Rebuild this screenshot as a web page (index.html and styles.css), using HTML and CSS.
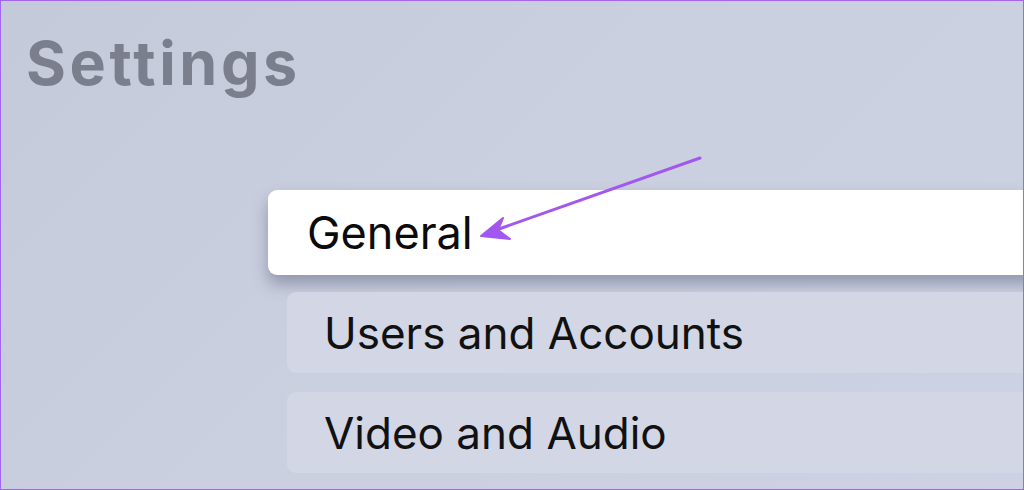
FILE: index.html
```html
<!DOCTYPE html>
<html>
<head>
<meta charset="utf-8">
<link rel="stylesheet" href="styles.css">
</head>
<body>
<div class="screen">
  <h1 class="title">Settings</h1>
  <div class="menu">
    <div class="item focused">General</div>
    <div class="item">Users and Accounts</div>
    <div class="item">Video and Audio</div>
  </div>
  <svg class="arrow" width="1024" height="490" viewBox="0 0 1024 490">
    <line x1="700" y1="158" x2="496" y2="230" stroke="#a257ee" stroke-width="3" stroke-linecap="round"/>
    <path d="M481 236 L503 218 L498 230 L510 239 Z" fill="#a257ee" stroke="#a257ee" stroke-width="2" stroke-linejoin="round"/>
  </svg>
</div>
</body>
</html>
```
FILE: styles.css
```css
html, body {
  margin: 0;
  padding: 0;
}
.screen {
  position: relative;
  box-sizing: border-box;
  width: 1024px;
  height: 490px;
  border: 1px solid #a465f2;
  overflow: hidden;
  background: linear-gradient(135deg, #c5cadb 0%, #cbd0e0 50%, #ccd2e3 100%);
  font-family: Inter, "Liberation Sans", sans-serif;
}
.title {
  margin: 0;
  padding: 29px 0 0 25px;
  font-size: 61px;
  line-height: 66px;
  font-weight: 700;
  color: #7b7f8d;
  letter-spacing: 3.6px;
}
.menu {
  display: flex;
  flex-direction: column;
  margin-top: 94px;
  margin-left: 267px;
  width: 800px;
}
.item {
  box-sizing: border-box;
  height: 81px;
  margin-left: 19px;
  padding-left: 37px;
  display: flex;
  align-items: center;
  background: #d2d6e5;
  border-radius: 9px;
  font-size: 44px;
  color: #111;
  margin-bottom: 19px;
}
.item.focused {
  margin-left: 0;
  height: 85px;
  padding-left: 39px;
  background: #ffffff;
  color: #0b0b0b;
  font-size: 45px;
  box-shadow: 0 9px 16px rgba(65, 72, 100, 0.42);
  margin-bottom: 17px;
}
.arrow {
  position: absolute;
  left: -1px;
  top: -1px;
}
```
